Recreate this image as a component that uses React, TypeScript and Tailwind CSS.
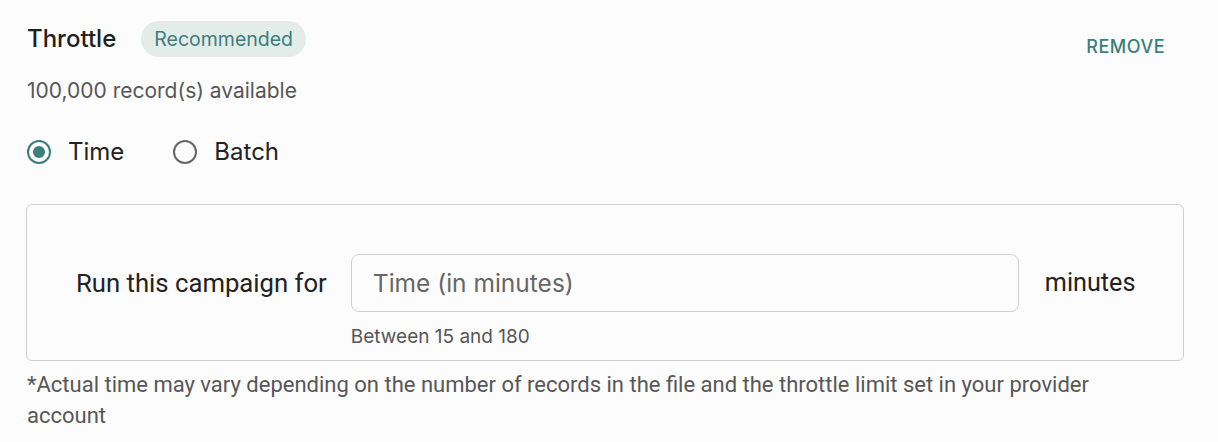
import React, { useState } from "react";

const teal = "text-[#3a7f7b]";

const Radio: React.FC<{ label: string; checked: boolean; onSelect: () => void }> = ({
  label,
  checked,
  onSelect,
}) => (
  <label className="flex items-center gap-[17px] cursor-pointer" onClick={onSelect}>
    <span
      className={`flex h-[24px] w-[24px] items-center justify-center rounded-full border-2 ${
        checked ? "border-[#3a7f7b]" : "border-[#666666]"
      }`}
    >
      {checked && <span className="h-[12px] w-[12px] rounded-full bg-[#3a7f7b]" />}
    </span>
    <span className="text-[24px] leading-[30px] text-[#222222]">{label}</span>
  </label>
);

export default function App() {
  const [mode, setMode] = useState<"time" | "batch">("time");

  return (
    <div className="min-h-[442px] w-[1218px] bg-[#fcfcfc] font-['Inter',sans-serif]">
      <div className="pl-[27px] pr-[34px] pt-[21px]">
        <div className="flex h-[36px] items-start justify-between">
          <div className="flex items-center gap-[25px]">
            <span className="text-[24px] leading-[36px] font-medium text-[#1f1f1f]">Throttle</span>
            <span className={`rounded-full bg-[#e4ecea] px-[13px] text-[19.5px] leading-[36px] ${teal}`}>
              Recommended
            </span>
          </div>
          <button className={`mt-[14px] mr-[19px] text-[18px] leading-[24px] font-medium tracking-[0.5px] ${teal}`}>
            REMOVE
          </button>
        </div>

        <div className="mt-[20px] text-[21px] leading-[28px] text-[#575757]">100,000 record(s) available</div>

        <div className="mt-[32px] flex items-center gap-[49px]">
          <Radio label="Time" checked={mode === "time"} onSelect={() => setMode("time")} />
          <Radio label="Batch" checked={mode === "batch"} onSelect={() => setMode("batch")} />
        </div>

        <div className="mt-[37px] ml-[-1px] w-[1158px] rounded-[6px] border border-[#cfcfcf] pl-[49px] pt-[49px] pb-[11px]">
          <div className="flex items-start">
            <span className="font-['Roboto',sans-serif] text-[25.7px] leading-[58px] text-[#222222]">
              Run this campaign for
            </span>
            <div className="ml-[24px] flex flex-col">
              <input
                className="h-[58px] w-[668px] rounded-[8px] border border-[#cfcfcf] bg-transparent px-[21px] text-[24.5px] text-[#222222] outline-none placeholder:text-[#666666]"
                placeholder="Time (in minutes)"
              />
              <span className="mt-[13px] text-[19px] leading-[24px] text-[#555555]">Between 15 and 180</span>
            </div>
            <span className="ml-[26px] font-['Roboto',sans-serif] text-[25.2px] leading-[58px] text-[#222222]">
              minutes
            </span>
          </div>
        </div>

        <p className="mt-[8px] w-[1110px] font-['Roboto',sans-serif] text-[22px] leading-[31px] text-[#575757]">
          *Actual time may vary depending on the number of records in the file and the throttle limit set in your provider
          account
        </p>
      </div>
    </div>
  );
}
